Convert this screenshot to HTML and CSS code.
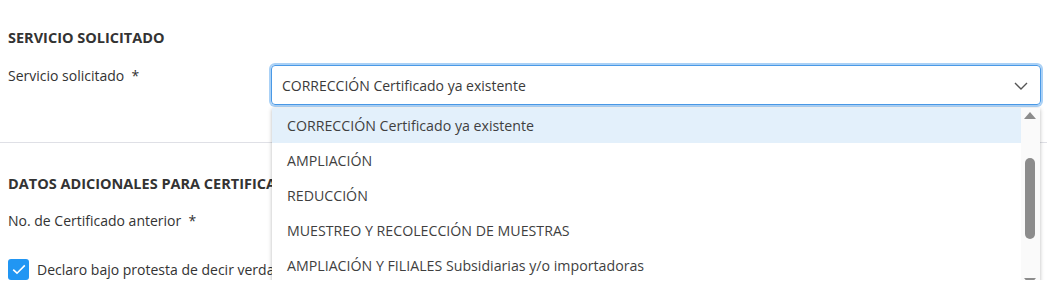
FILE: index.html
```html
<!DOCTYPE html>
<html lang="es">
<head>
    <meta charset="UTF-8">
    <meta name="viewport" content="width=device-width, initial-scale=1.0">
    <title>Servicio solicitado</title>
    <link rel="stylesheet" href="styles.css">
</head>
<body>

    <div class="section">
        <h2 class="section-title">SERVICIO SOLICITADO</h2>

        <div class="form-row">
            <label class="field-label" for="servicio">Servicio solicitado&nbsp; *</label>
            <div class="select-wrap">
                <div class="select-box" id="servicio">
                    <span class="select-value">CORRECCIÓN Certificado ya existente</span>
                    <svg class="chevron" width="14" height="8" viewBox="0 0 14 8">
                        <path d="M1 1 L7 7 L13 1" fill="none" stroke="#555" stroke-width="1.4"/>
                    </svg>
                </div>

                <div class="dropdown">
                    <ul class="options">
                        <li class="option active">CORRECCIÓN Certificado ya existente</li>
                        <li class="option">AMPLIACIÓN</li>
                        <li class="option">REDUCCIÓN</li>
                        <li class="option">MUESTREO Y RECOLECCIÓN DE MUESTRAS</li>
                        <li class="option">AMPLIACIÓN Y FILIALES Subsidiarias y/o importadoras</li>
                    </ul>
                    <div class="scrollbar">
                        <span class="arrow up"></span>
                        <span class="thumb"></span>
                        <span class="arrow down"></span>
                    </div>
                </div>
            </div>
        </div>
    </div>

    <hr class="divider">

    <div class="section">
        <h2 class="section-title second">DATOS ADICIONALES PARA CERTIFICADO</h2>

        <div class="form-row plain">
            <label class="field-label" for="certAnterior">No. de Certificado anterior&nbsp; *</label>
        </div>

        <div class="check-row">
            <span class="checkbox">
                <svg width="14" height="11" viewBox="0 0 14 11">
                    <path d="M1.2 5.6 L5 9.2 L12.8 1.4" fill="none" stroke="#fff" stroke-width="1.6"/>
                </svg>
            </span>
            <span class="check-text">Declaro bajo protesta de decir verdad</span>
        </div>
    </div>

</body>
</html>
```

FILE: styles.css
```css
:root {
    --text-color: #3a3a3a;
    --label-color: #333;
    --primary-color: #2196f3;
    --focus-border: #4a99e6;
    --focus-glow: #aad1f6;
    --hover-bg: #e3f0fb;
    --border-color: #dfe0e6;
    --scroll-color: #8c8c8c;
}

body {
    margin: 0;
    font-family: "Open Sans", "Liberation Sans", sans-serif;
    color: var(--text-color);
    background-color: #fff;
    overflow: hidden;
}

.section {
    padding: 0 8px;
}

.section-title {
    margin: 0;
    padding-top: 28px;
    font-size: 14.5px;
    font-weight: 700;
    line-height: 20px;
    color: #333;
    white-space: nowrap;
}

.section-title.second {
    padding-top: 31px;
}

.form-row {
    display: flex;
    margin-top: 17px;
}

.form-row.plain {
    margin-top: 16px;
}

.field-label {
    width: 263px;
    flex-shrink: 0;
    padding-top: 1px;
    font-size: 14px;
    line-height: 20px;
    color: var(--label-color);
}

.select-wrap {
    position: relative;
    flex: 1;
    margin-right: -2px;
}

.select-box {
    display: flex;
    align-items: center;
    justify-content: space-between;
    height: 38px;
    padding: 0 12px 0 10px;
    border: 1px solid var(--focus-border);
    border-radius: 4px;
    box-shadow: 0 0 0 2px var(--focus-glow);
    font-size: 14px;
}

.chevron {
    margin-top: 1px;
}

.dropdown {
    position: absolute;
    top: 43px;
    left: 1px;
    right: 1px;
    height: 183px;
    display: flex;
    background-color: #fff;
    box-shadow: 0 1px 4px rgba(0, 0, 0, 0.28);
    overflow: hidden;
    z-index: 10;
}

.options {
    flex: 1;
    margin: 0;
    padding: 0;
    list-style: none;
}

.option {
    height: 35px;
    line-height: 35px;
    padding-left: 15px;
    font-size: 14.2px;
    color: #3f3f3f;
    white-space: nowrap;
}

.option.active {
    background-color: var(--hover-bg);
}

.scrollbar {
    position: relative;
    width: 19px;
    flex-shrink: 0;
    background-color: #fafafa;
}

.arrow {
    position: absolute;
    left: 3px;
    width: 0;
    height: 0;
    border-left: 6px solid transparent;
    border-right: 6px solid transparent;
}

.arrow.up {
    top: 4px;
    border-bottom: 7px solid var(--scroll-color);
}

.arrow.down {
    bottom: 6px;
    border-top: 7px solid var(--scroll-color);
}

.thumb {
    position: absolute;
    top: 50px;
    left: 4px;
    width: 10px;
    height: 81px;
    border-radius: 5px;
    background-color: var(--scroll-color);
}

.divider {
    margin: 37px 0 0;
    border: none;
    border-top: 1px solid var(--border-color);
}

.check-row {
    display: flex;
    align-items: center;
    margin-top: 28px;
}

.checkbox {
    display: flex;
    align-items: center;
    justify-content: center;
    width: 21px;
    height: 21px;
    border-radius: 3px;
    background-color: var(--primary-color);
}

.check-text {
    margin-left: 8px;
    font-size: 14px;
    color: var(--label-color);
    white-space: nowrap;
}
```
